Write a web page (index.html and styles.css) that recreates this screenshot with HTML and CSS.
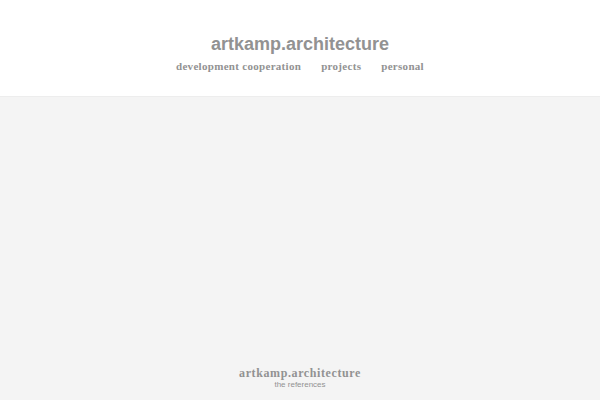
FILE: index.html
```html
<!DOCTYPE html>
<html>
<head>
<meta charset="utf-8">
<link rel="stylesheet" href="styles.css">
</head>
<body>
<header class="site-header">
  <h1 class="site-title">artkamp.architecture</h1>
  <nav class="main-nav">
    <a href="#">development cooperation</a>
    <a href="#">projects</a>
    <a href="#">personal</a>
  </nav>
</header>
<main class="content"></main>
<footer class="site-footer">
  <div class="footer-title">artkamp.architecture</div>
  <div class="footer-sub">the references</div>
</footer>
</body>
</html>
```
FILE: styles.css
```css
html, body { margin: 0; padding: 0; }
body {
  background: #f4f4f4;
  height: 400px;
  display: flex;
  flex-direction: column;
  overflow: hidden;
}
.site-header {
  background: #fff;
  height: 96px;
  border-bottom: 1px solid #ededed;
  display: flex;
  flex-direction: column;
  align-items: center;
}
.site-title {
  margin: 33px 0 0;
  font-family: "Liberation Sans", Arial, sans-serif;
  font-size: 18px;
  font-weight: bold;
  color: #929292;
  line-height: 22px;
}
.main-nav {
  margin-top: 4px;
  display: flex;
  gap: 20px;
}
.main-nav a {
  font-family: "Liberation Serif", serif;
  font-weight: bold;
  font-size: 11px;
  letter-spacing: 0.3px;
  color: #929292;
  text-decoration: none;
  line-height: 14px;
}
.content { flex: 1; }
.site-footer {
  display: flex;
  flex-direction: column;
  align-items: center;
  padding-bottom: 10px;
}
.footer-title {
  font-family: "Liberation Serif", serif;
  font-weight: bold;
  font-size: 12px;
  letter-spacing: 0.6px;
  color: #929292;
  line-height: 14px;
}
.footer-sub {
  font-family: "Liberation Sans", Arial, sans-serif;
  font-size: 8px;
  color: #929292;
  line-height: 10px;
}
```
